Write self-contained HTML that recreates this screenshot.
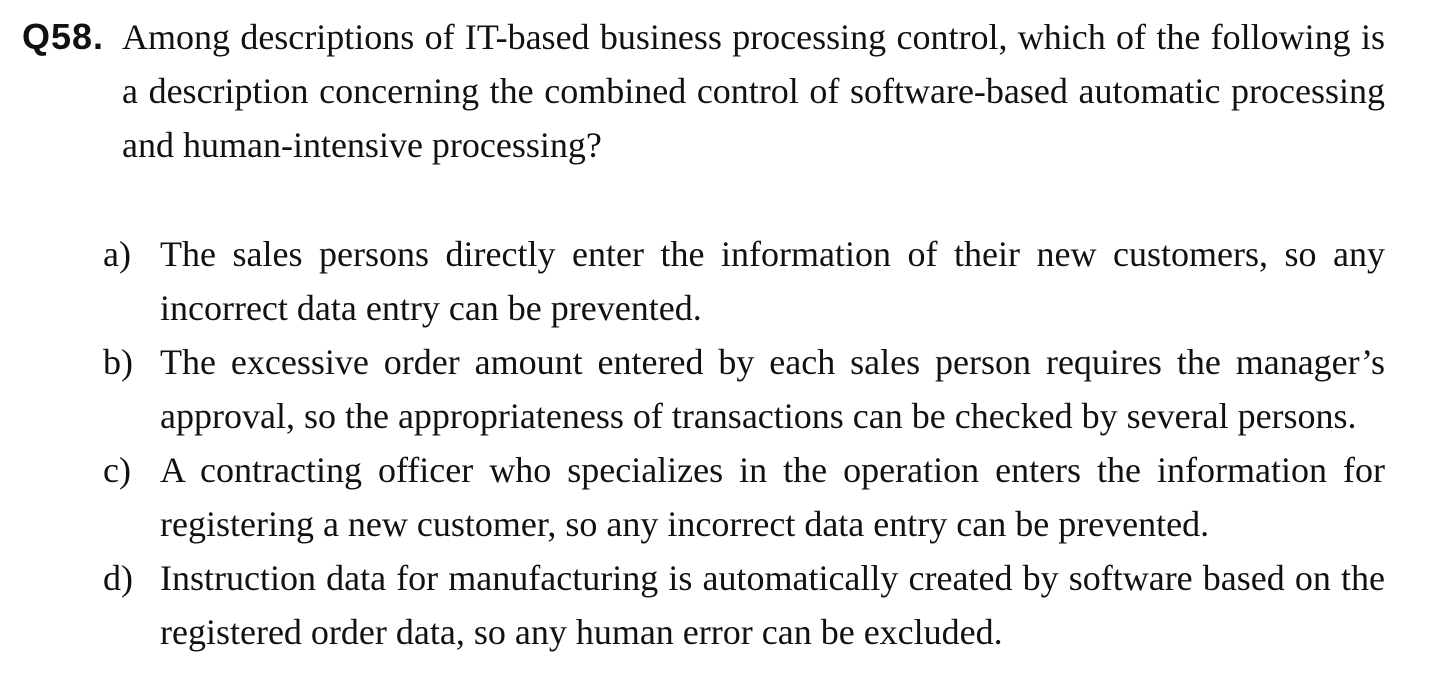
<!DOCTYPE html>
<html><head><meta charset="utf-8"><style>
body{margin:0;width:1450px;height:676px;background:#fff;overflow:hidden;font-family:"Liberation Serif",serif;font-size:36px;color:#111}
.l{position:absolute;height:54px;line-height:54px;white-space:nowrap}
.j{text-align:justify;text-align-last:justify;white-space:normal}
.q{position:absolute;left:22px;top:10px;line-height:54px;font-family:"Liberation Sans",sans-serif;font-weight:bold;font-size:36px;letter-spacing:1px}
</style></head><body>
<div class="q">Q58.</div>
<div class="l j" style="left:122px;width:1263px;top:10px">Among descriptions of IT-based business processing control, which of the following is</div>
<div class="l j" style="left:122px;width:1263px;top:64px">a description concerning the combined control of software-based automatic processing</div>
<div class="l" style="left:122px;top:118px">and human-intensive processing?</div>

<div class="l" style="left:103px;top:227px">a)</div>
<div class="l j" style="left:160px;width:1225px;top:227px">The sales persons directly enter the information of their new customers, so any</div>
<div class="l" style="left:160px;top:281px">incorrect data entry can be prevented.</div>

<div class="l" style="left:103px;top:335px">b)</div>
<div class="l j" style="left:160px;width:1225px;top:335px">The excessive order amount entered by each sales person requires the manager’s</div>
<div class="l" style="left:160px;top:389px">approval, so the appropriateness of transactions can be checked by several persons.</div>

<div class="l" style="left:103px;top:443px">c)</div>
<div class="l j" style="left:160px;width:1225px;top:443px">A contracting officer who specializes in the operation enters the information for</div>
<div class="l" style="left:160px;top:497px">registering a new customer, so any incorrect data entry can be prevented.</div>

<div class="l" style="left:103px;top:551px">d)</div>
<div class="l j" style="left:160px;width:1225px;top:551px">Instruction data for manufacturing is automatically created by software based on the</div>
<div class="l" style="left:160px;top:605px">registered order data, so any human error can be excluded.</div>
</body></html>
